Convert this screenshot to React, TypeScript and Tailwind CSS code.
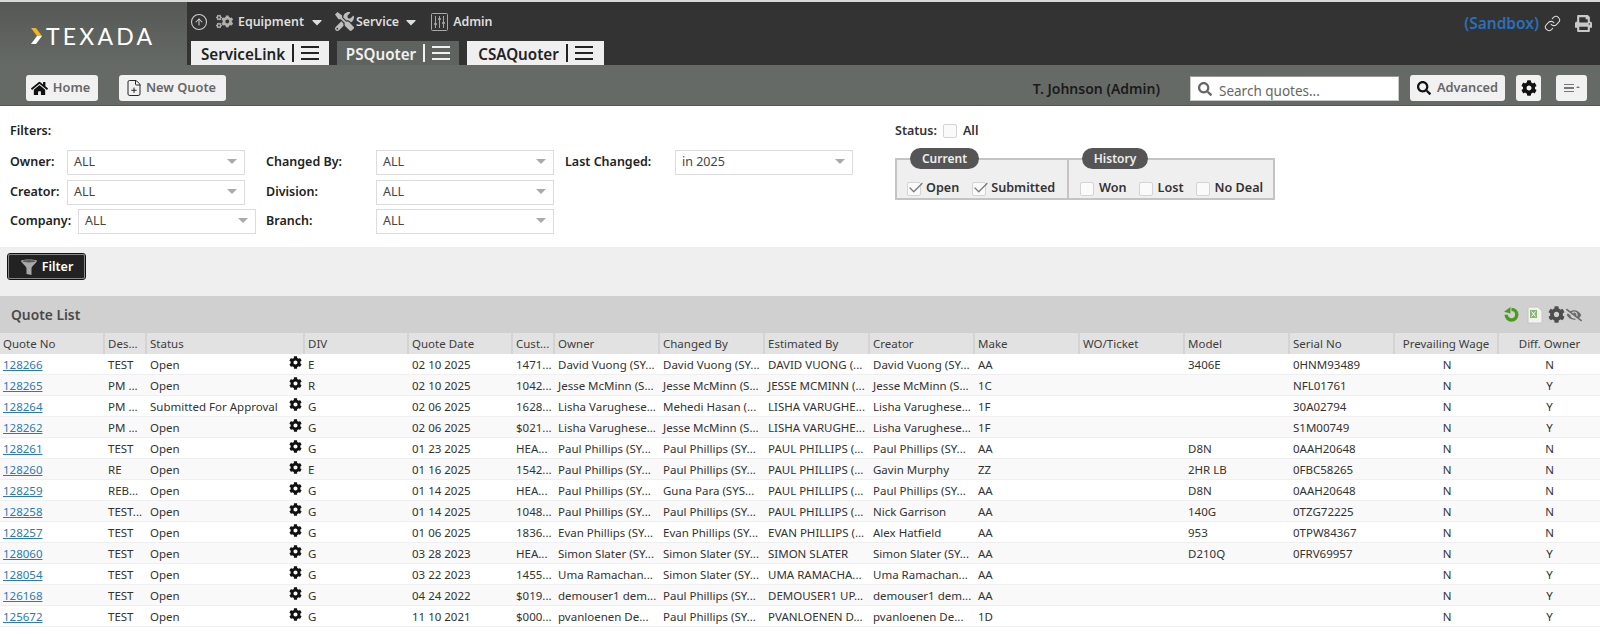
import React from "react";
import { FaCog, FaHome, FaPrint, FaSearch, FaCogs, FaTools, FaEyeSlash, FaCaretDown } from "react-icons/fa";
import { CircleArrowUp, Link, FilePlus, Check } from "lucide-react";

const cols = ["Quote No","Des...","Status","DIV","Quote Date","Cust...","Owner","Changed By","Estimated By","Creator","Make","WO/Ticket","Model","Serial No","Prevailing Wage","Diff. Owner"];
const G = "grid grid-cols-[105px_42px_158px_104px_104px_42px_105px_105px_105px_105px_105px_105px_105px_105px_104px_101px]";

const rows: string[][] = [
  ["128266","TEST","Open","E","02 10 2025","1471...","David Vuong (SY...","David Vuong (SY...","DAVID VUONG (...","David Vuong (SY...","AA","","3406E","0HNM93489","N","N"],
  ["128265","PM ...","Open","R","02 10 2025","1042...","Jesse McMinn (S...","Jesse McMinn (S...","JESSE MCMINN (...","Jesse McMinn (S...","1C","","","NFL01761","N","Y"],
  ["128264","PM ...","Submitted For Approval","G","02 06 2025","1628...","Lisha Varughese...","Mehedi Hasan (...","LISHA VARUGHE...","Lisha Varughese...","1F","","","30A02794","N","Y"],
  ["128262","PM ...","Open","G","02 06 2025","$021...","Lisha Varughese...","Jesse McMinn (S...","LISHA VARUGHE...","Lisha Varughese...","1F","","","S1M00749","N","Y"],
  ["128261","TEST","Open","G","01 23 2025","HEA...","Paul Phillips (SY...","Paul Phillips (SY...","PAUL PHILLIPS (...","Paul Phillips (SY...","AA","","D8N","0AAH20648","N","N"],
  ["128260","RE","Open","E","01 16 2025","1542...","Paul Phillips (SY...","Paul Phillips (SY...","PAUL PHILLIPS (...","Gavin Murphy","ZZ","","2HR LB","0FBC58265","N","N"],
  ["128259","REB...","Open","G","01 14 2025","HEA...","Paul Phillips (SY...","Guna Para (SYS...","PAUL PHILLIPS (...","Paul Phillips (SY...","AA","","D8N","0AAH20648","N","N"],
  ["128258","TEST...","Open","G","01 14 2025","1048...","Paul Phillips (SY...","Paul Phillips (SY...","PAUL PHILLIPS (...","Nick Garrison","AA","","140G","0TZG72225","N","N"],
  ["128257","TEST","Open","G","01 06 2025","1836...","Evan Phillips (SY...","Evan Phillips (SY...","EVAN PHILLIPS (...","Alex Hatfield","AA","","953","0TPW84367","N","N"],
  ["128060","TEST","Open","G","03 28 2023","HEA...","Simon Slater (SY...","Simon Slater (SY...","SIMON SLATER","Simon Slater (SY...","AA","","D210Q","0FRV69957","N","Y"],
  ["128054","TEST","Open","G","03 22 2023","1455...","Uma Ramachan...","Simon Slater (SY...","UMA RAMACHA...","Uma Ramachan...","AA","","","","N","Y"],
  ["126168","TEST","Open","G","04 24 2022","$019...","demouser1 dem...","Paul Phillips (SY...","DEMOUSER1 UP...","demouser1 dem...","AA","","","","N","Y"],
  ["125672","TEST","Open","G","11 10 2021","$000...","pvanloenen De...","Paul Phillips (SY...","PVANLOENEN D...","pvanloenen De...","1D","","","","N","Y"],
];

function Menu() {
  return (
    <span className="flex h-[18px] items-center gap-[7px]">
      <span className="h-[18px] w-[2px] bg-current" />
      <span className="flex w-[18px] flex-col gap-[4px]">
        <span className="h-[2px] bg-current" />
        <span className="h-[2px] bg-current" />
        <span className="h-[2px] bg-current" />
      </span>
    </span>
  );
}

function Select({ value }: { value: string }) {
  return (
    <div className="flex h-[25px] w-[178px] items-center justify-between border border-[#dcdcdc] bg-white pl-[6px] pr-[7px] text-[12.5px] text-[#444]">
      <span>{value}</span>
      <span className="mb-[2px] h-0 w-0 border-x-[5px] border-t-[5px] border-x-transparent border-t-[#aaa]" />
    </div>
  );
}

function Box({ checked }: { checked?: boolean }) {
  return (
    <span className="relative inline-block h-[14px] w-[14px] rounded-[2px] border border-[#d4d4d4] bg-[#fafafa]">
      {checked && <Check size={18} strokeWidth={1.6} className="absolute -left-[1px] -top-[4px] text-[#777]" />}
    </span>
  );
}

function Check1({ label, checked }: { label: string; checked?: boolean }) {
  return (
    <span className="flex items-center gap-[5px] text-[12.6px] font-semibold text-[#333]">
      <Box checked={checked} />
      {label}
    </span>
  );
}

function FilterRow({ label, value, gap }: { label: string; value: string; gap: string }) {
  return (
    <div className="flex h-[25px] items-center">
      <span className={`${gap} text-[12.5px] font-semibold text-[#222]`}>{label}</span>
      <Select value={value} />
    </div>
  );
}

function ToolButton({ children, className }: { children: React.ReactNode; className: string }) {
  return (
    <div className={`flex h-[26px] items-center justify-center rounded-[3px] bg-[#f1f1f1] text-[12.8px] font-semibold text-[#666] ${className}`}>
      {children}
    </div>
  );
}

function Tab({ label, active, w }: { label: string; active?: boolean; w: string }) {
  return (
    <div className={`flex h-[24px] ${w} items-center justify-center gap-[7px] text-[15.2px] font-semibold ${active ? "bg-[#5f635f] text-[#f1f1f1]" : "bg-[#efefef] text-[#222]"}`}>
      <span className="pt-[2px]">{label}</span>
      <Menu />
    </div>
  );
}

export default function App() {
  return (
    <div className="h-[634px] w-[1600px] overflow-hidden bg-white font-['Noto_Sans','Open_Sans',sans-serif]">
      <div className="h-[2px] bg-[#d8d8d8]" />
      <header className="flex h-[63px]">
        <div className="flex w-[187px] items-center bg-gradient-to-b from-[#555855] to-[#666a66] pl-[30px] pt-[5px]">
          <svg width="14" height="18" viewBox="0 0 14 18" className="mr-[2px]">
            <path d="M1 1h5l6 8H7z" fill="#f0b323" />
            <path d="M7 9h5l-6 8H1z" fill="#ffffff" />
          </svg>
          <span className="font-['Lato',sans-serif] text-[23px] font-normal leading-none tracking-[3.2px] text-white">TEXADA</span>
        </div>
        <div className="relative flex flex-1 flex-col bg-[#333333] pl-[4px]">
          <div className="flex h-[39px] items-center text-[12.4px] font-semibold text-[#dedede]">
            <CircleArrowUp size={18} strokeWidth={1.4} className="-ml-[1px] text-[#cfcfcf]" />
            <FaCogs size={17} className="ml-[8px] mr-[5px] -scale-x-100 text-[#b0b0b0]" />
            <span className="pt-[2px]">Equipment</span>
            <FaCaretDown size={16} className="ml-[5px] text-[#dedede]" />
            <FaTools size={19} className="ml-[10px] mr-[2px] text-[#bdbdbd]" />
            <span className="pt-[2px]">Service</span>
            <FaCaretDown size={16} className="ml-[4px] text-[#dedede]" />
            <svg width="17" height="18" viewBox="0 0 17 18" className="ml-[12px] mr-[5px] text-[#a8a8a8]" fill="none" stroke="currentColor" strokeWidth="1">
              <rect x="0.5" y="0.5" width="16" height="17" rx="1" />
              <path d="M4.5 3v12M8.5 3v12M12.5 3v12" />
              <path d="M3 11h3M7 6h3M11 10h3" strokeWidth="1.6" />
            </svg>
            <span className="pt-[2px]">Admin</span>
          </div>
          <div className="flex gap-[8px]">
            <Tab label="ServiceLink" w="w-[138px]" />
            <Tab label="PSQuoter" active w="w-[122px]" />
            <Tab label="CSAQuoter" w="w-[137px]" />
          </div>
          <div className="absolute right-[8px] top-[10px] flex items-center text-[#d8d8d8]">
            <span className="text-[15.5px] font-semibold text-[#2a70b8]">(Sandbox)</span>
            <Link size={17} strokeWidth={1.5} className="ml-[5px]" />
            <FaPrint size={17} className="ml-[14px] text-[#c9c9c9]" />
          </div>
        </div>
      </header>

      <div className="flex h-[41px] items-start border-b border-[#555] bg-[#666a66] pl-[26px] pr-[13px] pt-[10px]">
        <ToolButton className="w-[72px] gap-[5px] pr-[3px]">
          <FaHome size={17} className="text-[#111]" />
          Home
        </ToolButton>
        <ToolButton className="ml-[21px] w-[107px] gap-[3px] pr-[4px]">
          <FilePlus size={18} strokeWidth={1.3} className="text-[#222]" />
          New Quote
        </ToolButton>
        <span className="ml-auto mr-[30px] pt-[3px] text-[14px] font-semibold text-[#1a1a1a]">T. Johnson (Admin)</span>
        <div className="mt-[1px] flex h-[25px] w-[209px] items-center gap-[7px] border border-[#c9c9c9] border-t-[#999] bg-white pl-[7px] text-[13.5px] text-[#666]">
          <FaSearch size={14} className="text-[#666]" />
          <span className="pt-[5px]">Search quotes...</span>
        </div>
        <ToolButton className="ml-[11px] w-[95px] gap-[6px]">
          <FaSearch size={14} className="text-[#111]" />
          Advanced
        </ToolButton>
        <ToolButton className="ml-[11px] w-[25px]">
          <FaCog size={16} className="text-[#111]" />
        </ToolButton>
        <ToolButton className="ml-[15px] w-[31px] gap-[2px]">
          <span className="flex w-[10px] flex-col gap-[2px]">
            <span className="h-[1.5px] bg-[#777]" />
            <span className="h-[1.5px] bg-[#777]" />
            <span className="h-[1.5px] bg-[#777]" />
          </span>
          <span className="mb-[3px] h-0 w-0 border-x-[2px] border-b-[2px] border-x-transparent border-b-[#777]" />
        </ToolButton>
      </div>

      <section className="flex h-[141px] pl-[10px]">
        <div className="w-[256px] pt-[16px]">
          <div className="mb-[10px] text-[12.5px] font-semibold leading-[18px] text-[#222]">Filters:</div>
          <div className="flex flex-col gap-[4.5px]">
            <FilterRow label="Owner:" value="ALL" gap="w-[57px]" />
            <FilterRow label="Creator:" value="ALL" gap="w-[57px]" />
            <FilterRow label="Company:" value="ALL" gap="w-[68px]" />
          </div>
        </div>
        <div className="w-[299px] pt-[44px]">
          <div className="flex flex-col gap-[4.5px]">
            <FilterRow label="Changed By:" value="ALL" gap="w-[110px]" />
            <FilterRow label="Division:" value="ALL" gap="w-[110px]" />
            <FilterRow label="Branch:" value="ALL" gap="w-[110px]" />
          </div>
        </div>
        <div className="w-[330px] pt-[44px]">
          <FilterRow label="Last Changed:" value="in 2025" gap="w-[110px]" />
        </div>
        <div className="pt-[16px]">
          <div className="flex h-[18px] items-center gap-[6px] text-[12.5px] font-semibold text-[#333]">
            Status:
            <Box />
            <span>All</span>
          </div>
          <div className="mt-[8px] flex">
            <div className="relative mt-[10px] flex h-[42px] w-[172px] items-end gap-[13px] border-2 border-r-0 border-[#c4c4c4] bg-[#efefef] pl-[10px]">
              <span className="absolute -top-[12px] left-[13px] flex h-[21px] w-[69px] items-center justify-center rounded-full bg-[#555] text-[12px] font-semibold text-[#eee]">Current</span>
              <Check1 label="Open" checked />
              <Check1 label="Submitted" checked />
            </div>
            <div className="relative mt-[10px] flex h-[42px] w-[208px] items-end gap-[12px] border-2 border-[#c4c4c4] bg-[#efefef] pl-[11px]">
              <span className="absolute -top-[12px] left-[13px] flex h-[21px] w-[66px] items-center justify-center rounded-full bg-[#555] text-[12px] font-semibold text-[#eee]">History</span>
              <Check1 label="Won" />
              <Check1 label="Lost" />
              <Check1 label="No Deal" />
            </div>
          </div>
        </div>
      </section>

      <div className="flex h-[49px] items-start bg-[#efefef] pl-[8px] pt-[7px]">
        <div className="flex h-[25px] w-[77px] items-center justify-center gap-[4px] rounded-[2px] border border-[#888] bg-[#222] text-[12.5px] font-semibold text-white outline outline-1 outline-[#111]">
          <svg width="18" height="18" viewBox="0 0 18 18">
            <path d="M1 3c0-2 16-2 16 0 0 1-5 5-5.5 7v7l-5-1v-6C6 8 1 4 1 3z" fill="#a8a8a8" />
            <ellipse cx="9" cy="3.2" rx="6.5" ry="1.3" fill="#5a5a5a" />
          </svg>
          <span className="pt-[1px]">Filter</span>
        </div>
      </div>

      <div className="flex h-[37px] items-center bg-[#d0d0d0] pl-[11px] pr-[18px]">
        <span className="pt-[1px] text-[13.8px] font-semibold text-[#4a4a4a]">Quote List</span>
        <div className="ml-auto flex items-center">
          <svg width="17" height="17" viewBox="0 0 16 16" fill="none">
            <path d="M8 3.2a5 5 0 1 1-5 5" stroke="#4c9a1f" strokeWidth="3.2" />
            <path d="M1 5.5 7 1v6z" fill="#4c9a1f" />
          </svg>
          <svg width="16" height="18" viewBox="0 0 16 18" className="ml-[7px]">
            <path d="M1 1h10l4 4v12H1z" fill="#f1f3ec" stroke="#c6c6c6" />
            <rect x="3" y="4" width="7" height="8" fill="#86b86e" />
            <path d="M4.5 5.5l4 5M8.5 5.5l-4 5" stroke="#fff" strokeWidth="1" />
          </svg>
          <FaCog size={17} className="ml-[5px] text-[#4d4d4d]" />
          <FaEyeSlash size={16} className="ml-[1px] text-[#6a6a6a]" />
        </div>
      </div>

      <div className="text-[11.5px] text-[#333]">
        <div className={`${G} h-[21px] bg-[#e2e2e2] text-[#3d3d3d]`}>
          {cols.map((c, i) => (
            <div key={c} className={`flex items-center overflow-hidden whitespace-nowrap border-r-2 border-[#d4d4d4] px-[3px] pt-[1px] last:border-r-0 ${i >= 14 ? "justify-center" : ""}`}>{c}</div>
          ))}
        </div>
        {rows.map((r, ri) => (
          <div key={r[0]} className={`${G} h-[21px] border-b border-[#efefef] ${ri % 2 ? "bg-[#f9f9f9]" : "bg-white"}`}>
            {r.map((c, i) => (
              <div key={i} className={`relative flex items-center overflow-hidden whitespace-nowrap px-[3px] pt-[2px] ${i >= 14 ? "justify-center" : ""}`}>
                {i === 0 ? (
                  <a className="text-[#2a7ab8] underline">{c}</a>
                ) : (
                  c
                )}
                {i === 2 && <FaCog size={13} className="absolute right-[3px] top-[2px] text-[#111]" />}
              </div>
            ))}
          </div>
        ))}
      </div>
    </div>
  );
}
